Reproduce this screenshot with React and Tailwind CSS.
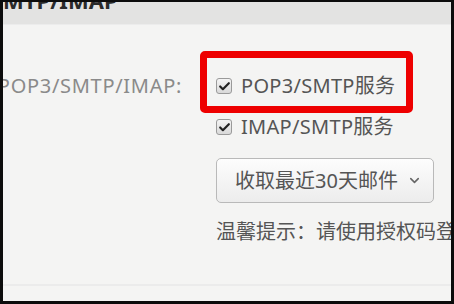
import { Check, ChevronDown } from 'lucide-react'

const font = { fontFamily: '"Noto Sans", "Noto Sans CJK SC", sans-serif' }

function Box() {
  return (
    <span className="flex h-[16px] w-[16px] shrink-0 items-center justify-center rounded-[3px] border border-[#9a9a9a] bg-gradient-to-b from-[#f4f4f4] to-[#d9d9d9]">
      <Check size={13} strokeWidth={4} className="text-[#222]" />
    </span>
  )
}

export default function App() {
  return (
    <div className="h-[304px] w-[454px] overflow-hidden bg-[#0c0c0c] pl-[3px] pt-[2px]" style={font}>
      <div className="relative flex h-[299px] w-[448px] flex-col overflow-hidden bg-[#f4f4f3]">
        <header className="h-[23px] shrink-0 overflow-hidden border-b border-[#ececec] bg-[#e3e3e2]">
          <div className="-ml-[12px] -mt-[15px] whitespace-nowrap text-[22px] font-bold leading-[26px] text-[#2a2a2a]">
            SMTP/IMAP
          </div>
        </header>

        <div className="flex pt-[47px]">
          <div className="flex w-[179px] shrink-0 justify-end overflow-hidden">
            <span className="whitespace-nowrap text-[20px] leading-[28px] tracking-[0.7px] text-[#8a8a8a]">开启POP3/SMTP/IMAP:</span>
          </div>
          <div className="ml-[34px] flex flex-col">
            <label className="flex h-[28px] items-center gap-[9px] text-[20px] text-[#555]">
              <Box />
              <span className="whitespace-nowrap tracking-[0.3px]">POP3/SMTP服务</span>
            </label>
            <label className="mt-[13px] flex h-[28px] items-center gap-[9px] text-[20px] text-[#555]">
              <Box />
              <span className="whitespace-nowrap tracking-[0.3px]">IMAP/SMTP服务</span>
            </label>
            <button className="mt-[17px] flex h-[45px] w-[218px] items-center rounded-[5px] border border-[#b9b9b9] bg-gradient-to-b from-[#fdfdfd] to-[#ececec] pl-[18px] text-[20px] text-[#555]">
              <span className="whitespace-nowrap">收取最近30天邮件</span>
              <ChevronDown size={15} strokeWidth={2.5} className="ml-[9px] text-[#666]" />
            </button>
            <p className="mt-[17px] whitespace-nowrap text-[20px] leading-[24px] text-[#555]">温馨提示：请使用授权码登录第三方邮件客户端</p>
          </div>
        </div>

        <div className="mt-auto mb-[15px] h-[2px] bg-[#ebebeb]" />

        <div className="absolute left-[197px] top-[49px] h-[62px] w-[213px] rounded-[5px] border-[7px] border-[#ee0000]" />
      </div>
    </div>
  )
}
